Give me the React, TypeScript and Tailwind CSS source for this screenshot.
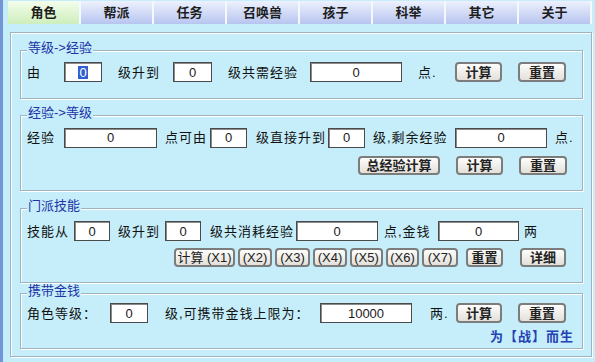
const tabs = ["角色", "帮派", "任务", "召唤兽", "孩子", "科举", "其它", "关于"];

function Input({ w, value = "0", selected = false }: { w: string; value?: string; selected?: boolean }) {
  return (
    <div
      className={`${w} h-[20px] shrink-0 bg-white border border-[#4a4a4a] shadow-[inset_1px_1px_0_#8a8a8a] flex items-center justify-center text-[13px] text-[#1a1a1a] leading-none`}
    >
      {selected ? <span className="bg-[#2f5fd0] text-white px-[1px]">{value}</span> : value}
    </div>
  );
}

function Btn({ w, children, h = "h-[20px]", bold = true }: { w: string; children: React.ReactNode; h?: string; bold?: boolean }) {
  return (
    <div
      className={`${w} ${h} shrink-0 rounded-[4px] border-2 border-[#7c7c7c] bg-gradient-to-b from-[#fdfdfb] to-[#e2e0da] flex items-center justify-center text-[13px] ${
        bold ? "font-bold" : "font-normal"
      } text-[#222] leading-none whitespace-nowrap`}
    >
      {children}
    </div>
  );
}

function Label({ w, ml = "", children }: { w: string; ml?: string; children: React.ReactNode }) {
  return <div className={`${w} ${ml} shrink-0 whitespace-nowrap text-[13px] text-[#111] leading-none tracking-[1px]`}>{children}</div>;
}

function Group({ title, h, mt, pt, children }: { title: string; h: string; mt: string; pt: string; children: React.ReactNode }) {
  return (
    <div className={`relative ${h} ${mt} ${pt} w-[563px] pl-[6px] border border-[#9db3bf] shadow-[inset_1px_1px_0_#ffffff,1px_1px_0_#ffffff]`}>
      <span className="absolute -top-[10px] left-[6px] px-[1px] bg-[#c6eefa] text-[13px] leading-[13px] text-[#2233a8] whitespace-nowrap">
        {title}
      </span>
      {children}
    </div>
  );
}

export default function App() {
  return (
    <div className="w-[595px] h-[362px] bg-[#c6eefa] border-l-[3px] border-l-[#7096d8] overflow-hidden font-['Liberation_Sans','Noto_Sans_CJK_SC',sans-serif]">
      <div className="flex pl-[5px] pt-[1px] h-[24px]">
        {tabs.map((t, i) => (
          <div
            key={t}
            className={`w-[73px] h-[23px] flex items-center justify-center border-r-2 border-r-[#f4f8ff] text-[13px] font-bold text-[#1e1e1e] ${
              i === 0
                ? "bg-gradient-to-b from-[#f4fdec] to-[#cdeebc]"
                : "bg-gradient-to-b from-[#eef1fd] to-[#b7c5ef]"
            }`}
          >
            {t}
          </div>
        ))}
      </div>

      <div className="ml-[7px] mt-[8px] w-[582px] h-[325px] border border-[#9db3bf] shadow-[inset_1px_1px_0_#ffffff,1px_1px_0_#ffffff] pl-[9px]">
        <Group title="等级->经验" h="h-[49px]" mt="mt-[17px]" pt="pt-[11px]">
          <div className="flex items-center h-[20px]">
            <Label w="w-[37px]">由</Label>
            <Input w="w-[38px]" selected />
            <Label w="w-[55px]" ml="ml-[16px]">级升到</Label>
            <Input w="w-[39px]" />
            <Label w="w-[82px]" ml="ml-[16px]">级共需经验</Label>
            <Input w="w-[92px]" />
            <Label w="w-[37px]" ml="ml-[16px]">点.</Label>
            <Btn w="w-[47px]">计算</Btn>
            <div className="ml-[16px]">
              <Btn w="w-[48px]">重置</Btn>
            </div>
          </div>
        </Group>

        <Group title="经验->等级" h="h-[76px]" mt="mt-[16px]" pt="pt-[11px]">
          <div className="flex items-center h-[21px]">
            <Label w="w-[37px]">经验</Label>
            <Input w="w-[93px]" />
            <Label w="w-[45px]" ml="ml-[8px]">点可由</Label>
            <Input w="w-[37px]" />
            <Label w="w-[72px]" ml="ml-[9px]">级直接升到</Label>
            <Input w="w-[37px]" />
            <Label w="w-[82px]" ml="ml-[8px]">级,剩余经验</Label>
            <Input w="w-[92px]" />
            <Label w="w-[20px]" ml="ml-[8px]">点.</Label>
          </div>
          <div className="flex justify-end items-center gap-[16px] pr-[15px] mt-[8px]">
            <Btn w="w-[82px]" h="h-[19px]">总经验计算</Btn>
            <Btn w="w-[47px]" h="h-[19px]">计算</Btn>
            <Btn w="w-[48px]" h="h-[19px]">重置</Btn>
          </div>
        </Group>

        <Group title="门派技能" h="h-[75px]" mt="mt-[17px]" pt="pt-[12px]">
          <div className="flex items-center h-[20px]">
            <Label w="w-[47px]">技能从</Label>
            <Input w="w-[36px]" />
            <Label w="w-[47px]" ml="ml-[8px]">级升到</Label>
            <Input w="w-[36px]" />
            <Label w="w-[86px]" ml="ml-[9px]">级共消耗经验</Label>
            <Input w="w-[82px]" />
            <Label w="w-[54px]" ml="ml-[6px]">点,金钱</Label>
            <Input w="w-[81px]" />
            <Label w="w-[20px]" ml="ml-[5px]">两</Label>
          </div>
          <div className="flex justify-end items-center pr-[16px] mt-[7px]">
            <div className="flex gap-[3px]">
              <Btn w="w-[61px]" h="h-[19px]" bold={false}>计算 (X1)</Btn>
              <Btn w="w-[34px]" h="h-[19px]" bold={false}>(X2)</Btn>
              <Btn w="w-[35px]" h="h-[19px]" bold={false}>(X3)</Btn>
              <Btn w="w-[34px]" h="h-[19px]" bold={false}>(X4)</Btn>
              <Btn w="w-[33px]" h="h-[19px]" bold={false}>(X5)</Btn>
              <Btn w="w-[33px]" h="h-[19px]" bold={false}>(X6)</Btn>
              <Btn w="w-[36px]" h="h-[19px]" bold={false}>(X7)</Btn>
            </div>
            <div className="ml-[8px]">
              <Btn w="w-[37px]" h="h-[19px]">重置</Btn>
            </div>
            <div className="ml-[17px]">
              <Btn w="w-[46px]" h="h-[19px]">详细</Btn>
            </div>
          </div>
        </Group>

        <Group title="携带金钱" h="h-[56px]" mt="mt-[10px]" pt="pt-[9px]">
          <div className="flex items-center h-[20px]">
            <Label w="w-[83px]">角色等级：</Label>
            <Input w="w-[38px]" />
            <Label w="w-[155px]" ml="ml-[17px]">级,可携带金钱上限为：</Label>
            <Input w="w-[92px]" value="10000" />
            <Label w="w-[26px]" ml="ml-[18px]">两.</Label>
            <Btn w="w-[46px]">计算</Btn>
            <div className="ml-[16px]">
              <Btn w="w-[48px]">重置</Btn>
            </div>
          </div>
          <div className="flex justify-end pr-[8px] mt-[6px] text-[13px] leading-[15px] font-bold text-[#2440b4] whitespace-nowrap tracking-[1px]">
            为【战】而生
          </div>
        </Group>
      </div>
    </div>
  );
}
